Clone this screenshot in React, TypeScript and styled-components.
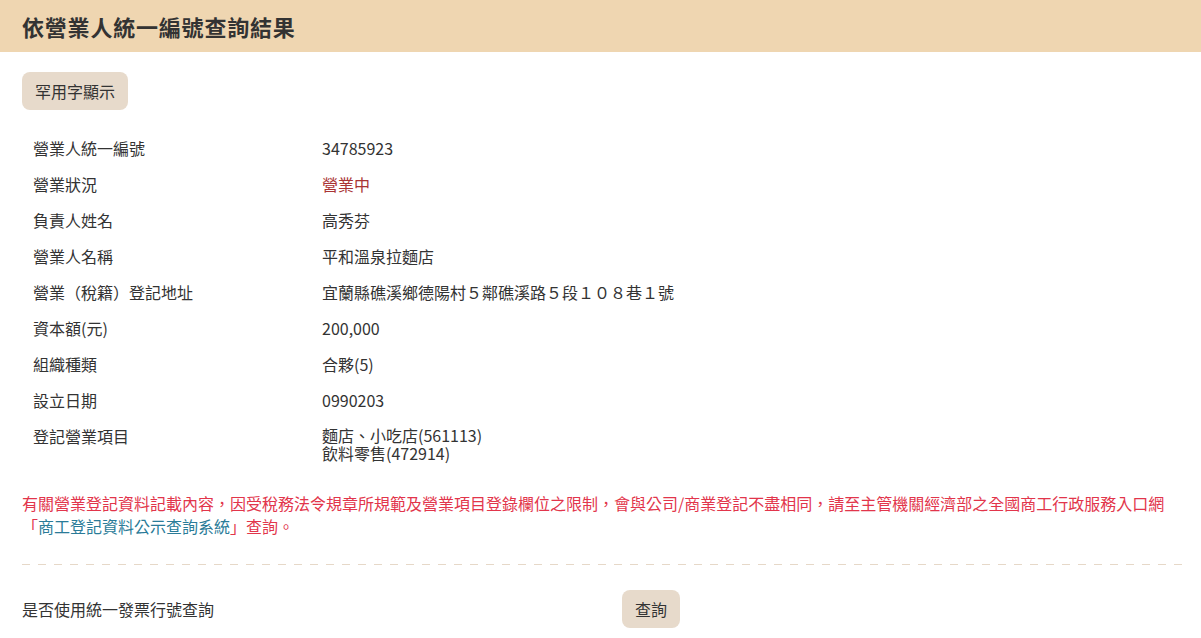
import styled, { createGlobalStyle } from 'styled-components';

const GlobalStyle = createGlobalStyle`
  body {
    margin: 0;
    background: #fff;
    color: #333;
    font-family: "Noto Sans CJK TC", "Noto Sans", sans-serif;
  }
`;

const Header = styled.header`
  height: 52px;
  display: flex;
  align-items: center;
  padding-left: 22px;
  background: #efd6b1;
`;

const Title = styled.h1`
  margin: 0;
  font-size: 22px;
  font-weight: 700;
  letter-spacing: 0.8px;
  color: #333;
`;

const Content = styled.main`
  padding: 20px 18px 0 22px;
`;

const SoftButton = styled.button`
  height: 38px;
  padding: 0 13px;
  border: none;
  border-radius: 8px;
  background: #e7dacb;
  color: #333;
  font-family: inherit;
  font-size: 16px;
  cursor: pointer;
`;

const Table = styled.div`
  margin-top: 20px;
  padding-left: 11px;
  display: grid;
  grid-template-columns: 289px 1fr;
`;

const Label = styled.div`
  font-size: 16px;
  line-height: 20px;
  padding: 8px 0;
`;

const Value = styled.div<{ $tone?: 'status'; $tight?: boolean }>`
  font-size: 16px;
  line-height: ${(p) => (p.$tight ? '18px' : '20px')};
  padding: 8px 0;
  color: ${(p) => (p.$tone === 'status' ? '#a93434' : '#333')};
`;

const Notice = styled.p`
  margin: 22px 0 0;
  font-size: 16px;
  line-height: 23px;
  color: #e2354b;
`;

const NoticeLink = styled.a`
  color: #2a7b98;
  text-decoration: none;
`;

const Dashed = styled.div`
  margin-top: 26px;
  height: 1px;
  background: repeating-linear-gradient(to right, #e6d8c8 0 8px, transparent 8px 16px);
`;

const QueryRow = styled.div`
  margin-top: 25px;
  display: grid;
  grid-template-columns: 600px auto;
  align-items: center;
  justify-content: start;
  font-size: 16px;
`;

const rows: { label: string; value: string[]; tone?: 'status' }[] = [
  { label: '營業人統一編號', value: ['34785923'] },
  { label: '營業狀況', value: ['營業中'], tone: 'status' },
  { label: '負責人姓名', value: ['高秀芬'] },
  { label: '營業人名稱', value: ['平和溫泉拉麵店'] },
  { label: '營業（稅籍）登記地址', value: ['宜蘭縣礁溪鄉德陽村５鄰礁溪路５段１０８巷１號'] },
  { label: '資本額(元)', value: ['200,000'] },
  { label: '組織種類', value: ['合夥(5)'] },
  { label: '設立日期', value: ['0990203'] },
  { label: '登記營業項目', value: ['麵店、小吃店(561113)', '飲料零售(472914)'] },
];

export default function App() {
  return (
    <>
      <GlobalStyle />
      <Header>
        <Title>依營業人統一編號查詢結果</Title>
      </Header>
      <Content>
        <SoftButton>罕用字顯示</SoftButton>
        <Table>
          {rows.map((row) => [
            <Label key={row.label}>{row.label}</Label>,
            <Value key={row.label + '-v'} $tone={row.tone} $tight={row.value.length > 1}>
              {row.value.map((line) => (
                <div key={line}>{line}</div>
              ))}
            </Value>,
          ])}
        </Table>
        <Notice>
          有關營業登記資料記載內容，因受稅務法令規章所規範及營業項目登錄欄位之限制，會與公司/商業登記不盡相同，請至主管機關經濟部之全國商工行政服務入口網
          <br />「<NoticeLink href="#">商工登記資料公示查詢系統</NoticeLink>」查詢。
        </Notice>
        <Dashed />
        <QueryRow>
          <span>是否使用統一發票行號查詢</span>
          <SoftButton>查詢</SoftButton>
        </QueryRow>
      </Content>
    </>
  );
}
